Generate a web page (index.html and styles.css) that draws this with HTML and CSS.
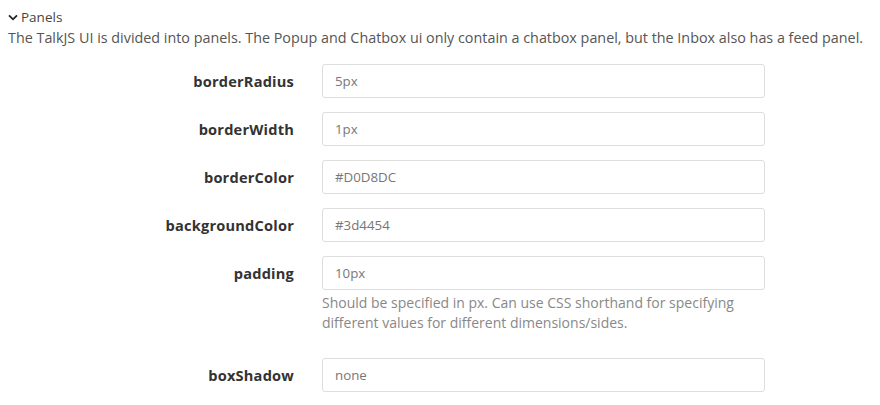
FILE: index.html
```html
<!DOCTYPE html>
<html lang="en">
<head>
    <meta charset="UTF-8" />
    <title>Panels</title>
    <link rel="stylesheet" href="styles.css">
</head>
<body>

<section class="group">
    <div class="group-title">
        <svg class="chevron" width="10" height="7" viewBox="0 0 10 7"><path d="M1 1.3 L5 5.3 L9 1.3" fill="none" stroke="#222" stroke-width="1.8"/></svg>
        <span>Panels</span>
    </div>
    <p class="group-desc">The TalkJS UI is divided into panels. The Popup and Chatbox ui only contain a chatbox panel, but the Inbox also has a feed panel.</p>

    <div class="fields">
        <div class="field">
            <label>borderRadius</label>
            <div class="control"><input type="text" value="5px"></div>
        </div>
        <div class="field">
            <label>borderWidth</label>
            <div class="control"><input type="text" value="1px"></div>
        </div>
        <div class="field">
            <label>borderColor</label>
            <div class="control"><input type="text" value="#D0D8DC"></div>
        </div>
        <div class="field">
            <label>backgroundColor</label>
            <div class="control"><input type="text" value="#3d4454"></div>
        </div>
        <div class="field">
            <label>padding</label>
            <div class="control">
                <input type="text" value="10px">
                <p class="hint">Should be specified in px. Can use CSS shorthand for specifying different values for different dimensions/sides.</p>
            </div>
        </div>
        <div class="field">
            <label>boxShadow</label>
            <div class="control"><input type="text" value="none"></div>
        </div>
    </div>
</section>

</body>
</html>
```

FILE: styles.css
```css
body {
    font-family: 'Open Sans', sans-serif;
    background-color: white;
    margin: 0;
    padding: 0;
    color: #555;
}

.group {
    padding: 8px 8px 0 8px;
}

.group-title {
    display: flex;
    align-items: center;
    gap: 3px;
    height: 18px;
    font-size: 13.5px;
    color: #444;
}

.group-desc {
    margin: 2px 0 0 0;
    font-size: 14.35px;
    line-height: 20px;
    white-space: nowrap;
}

.fields {
    margin-top: 16px;
}

.field {
    display: flex;
    align-items: flex-start;
    margin-bottom: 14px;
}

.field label {
    width: 286px;
    flex: none;
    text-align: right;
    font-weight: bold;
    font-size: 14.6px;
    letter-spacing: 0.2px;
    color: #333;
    line-height: 34px;
}

.control {
    margin-left: 28px;
    width: 443px;
}

.control input {
    box-sizing: border-box;
    width: 100%;
    height: 34px;
    padding: 0 12px;
    border: 1px solid #ddd;
    border-radius: 3px;
    font-family: 'Open Sans', sans-serif;
    font-size: 13.3px;
    color: #777;
}

.hint {
    margin: 3px 0 11px 0;
    padding-right: 20px;
    font-size: 14px;
    line-height: 20px;
    color: #888;
}
```
